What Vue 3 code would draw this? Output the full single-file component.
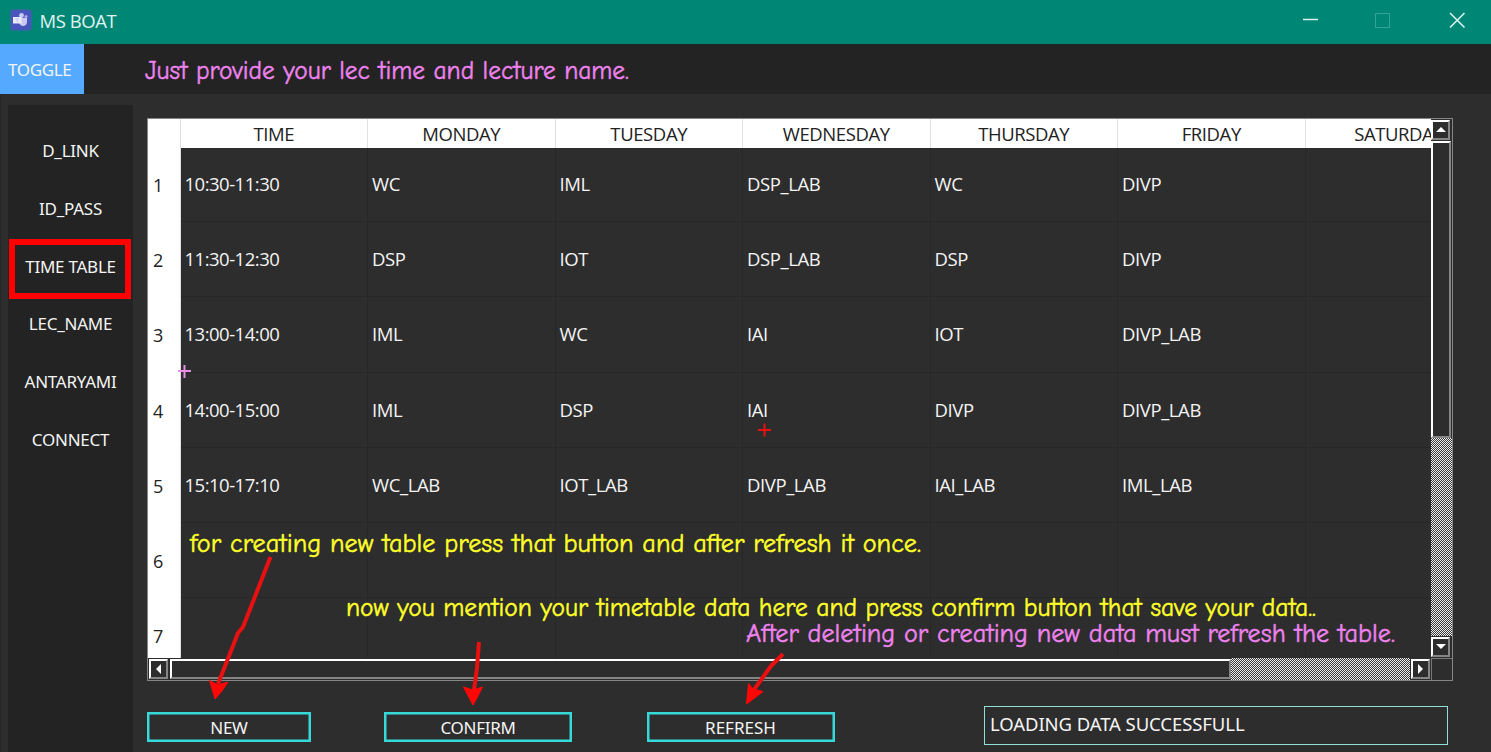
<script setup>
const menu = ['D_LINK', 'ID_PASS', 'TIME TABLE', 'LEC_NAME', 'ANTARYAMI', 'CONNECT']
const days = ['TIME', 'MONDAY', 'TUESDAY', 'WEDNESDAY', 'THURSDAY', 'FRIDAY', 'SATURDAY']
const rows = [
  ['10:30-11:30', 'WC', 'IML', 'DSP_LAB', 'WC', 'DIVP', ''],
  ['11:30-12:30', 'DSP', 'IOT', 'DSP_LAB', 'DSP', 'DIVP', ''],
  ['13:00-14:00', 'IML', 'WC', 'IAI', 'IOT', 'DIVP_LAB', ''],
  ['14:00-15:00', 'IML', 'DSP', 'IAI', 'DIVP', 'DIVP_LAB', ''],
  ['15:10-17:10', 'WC_LAB', 'IOT_LAB', 'DIVP_LAB', 'IAI_LAB', 'IML_LAB', ''],
  ['', '', '', '', '', '', ''],
  ['', '', '', '', '', '', ''],
]
const notes = [
  { x: 145, y: 79, w: 484, tone: 'pink', text: 'Just provide your lec time and lecture name.' },
  { x: 190, y: 552, w: 731, tone: 'yellow', text: 'for creating new table press that button and after refresh it once.' },
  { x: 346, y: 616, w: 970, tone: 'yellow', text: 'now you mention your timetable data here and press confirm button that save your data..' },
  { x: 746, y: 642, w: 649, tone: 'pink', text: 'After deleting or creating new data must refresh the table.' },
]
</script>

<template>
  <div class="window">
    <header class="titlebar">
      <svg class="logo" width="22" height="22" viewBox="0 0 22 22">
        <rect width="22" height="22" rx="4" fill="#2f6aa0" />
        <rect x="1.500" y="1.500" width="19" height="19" rx="3" fill="#4b53bc" />
        <circle cx="11.500" cy="6.500" r="2.400" fill="#c9caf2" />
        <circle cx="16" cy="7.500" r="1.600" fill="#a9acec" />
        <path d="M9 9h8v4c0 2.500-2 4-4 4S9 15 9 13z" fill="#c9caf2" />
        <path d="M3 8h8.500v6.500H3z" fill="#e9e9fb" />
        <path d="M5.500 9.800h3.500M7.300 9.800v3.500" stroke="#c3c5f0" stroke-width="1" />
      </svg>
      <span class="title">MS BOAT</span>
      <svg class="controls" width="160" height="20" viewBox="0 0 160 20" fill="none">
        <path d="M0 9.500h15" stroke="#d9f3ee" stroke-width="1.500" />
        <rect x="72.500" y="3.500" width="14" height="14" stroke="#36a294" />
        <path d="M147 3l14.500 14.500M161.500 3l-14.500 14.500" stroke="#d9f3ee" stroke-width="1.600" />
      </svg>
    </header>
    <div class="topbar"><button class="toggle">TOGGLE</button></div>
    <div class="content">
      <nav class="sidebar">
        <a v-for="item in menu" :key="item" class="item"><span>{{ item }}</span></a>
      </nav>
      <main class="main">
        <div class="frame">
          <div class="viewport">
            <div class="row head">
              <div class="num"></div>
              <div v-for="d in days" :key="d" class="cell">{{ d }}</div>
            </div>
            <div v-for="(r, i) in rows" :key="i" class="row">
              <div class="num">{{ i + 1 }}</div>
              <div v-for="(c, j) in r" :key="j" class="cell" :class="{ time: j === 0 }">{{ c }}</div>
            </div>
          </div>
          <div class="vbar">
            <div class="arrow"><svg width="10" height="6" viewBox="0 0 10 6"><path d="M5 0l5 5H0z" fill="#fff" /></svg></div>
            <div class="thumb vthumb"></div>
            <div class="dither"></div>
            <div class="arrow"><svg width="10" height="6" viewBox="0 0 10 6"><path d="M0 0h10L5 5z" fill="#fff" /></svg></div>
          </div>
          <div class="hbar">
            <div class="arrow"><svg width="6" height="10" viewBox="0 0 6 10"><path d="M5 0v10L0 5z" fill="#fff" /></svg></div>
            <div class="thumb hthumb"></div>
            <div class="dither"></div>
            <div class="arrow"><svg width="6" height="10" viewBox="0 0 6 10"><path d="M0 0v10l5-5z" fill="#fff" /></svg></div>
          </div>
          <div class="corner"></div>
        </div>
        <div class="actions">
          <button class="btn new">NEW</button>
          <button class="btn confirm">CONFIRM</button>
          <button class="btn refresh">REFRESH</button>
          <div class="status">LOADING DATA SUCCESSFULL</div>
        </div>
      </main>
    </div>
    <svg class="notes" width="1491" height="752" viewBox="0 0 1491 752">
      <rect x="12" y="242" width="116" height="54" fill="none" stroke="#fe0000" stroke-width="6" />
      <text v-for="n in notes" :key="n.y" :x="n.x" :y="n.y" :textLength="n.w" lengthAdjust="spacingAndGlyphs" :class="n.tone">{{ n.text }}</text>
      <g fill="none" stroke="#e81010" stroke-width="4" stroke-linejoin="round">
        <path d="M270.500 557L243 627L238 633L218 684" />
        <path d="M479 642L477 668L474 690" />
        <path d="M783 654L771 666L753 691" />
      </g>
      <g fill="#fe0606" stroke="#fe0606" stroke-width="1" stroke-linejoin="round">
        <path d="M209.500 680.500L218 685L228 682L222 691L215 699Z" />
        <path d="M463.500 687L473 690L482.500 687L478 696L473 705Z" />
        <path d="M748.500 683.500L753 689L763 691.500L756 697L746.500 704Z" />
      </g>
      <path d="M178 371h13M184.500 365v13" stroke="#ea8cea" stroke-width="2" />
      <path d="M758 430h13M764.500 423.500v13" stroke="#e81010" stroke-width="2" />
    </svg>
  </div>
</template>

<style>
body { margin: 0; background: #2d2d2d; overflow: hidden; }
</style>

<style scoped>
.window {
  position: relative; display: flex; flex-direction: column;
  width: 1491px; height: 752px; overflow: hidden; background: #2d2d2d;
  font-family: "Open Sans", "Noto Sans", sans-serif; color: #f4f4f4;
}
.window *, .window { box-sizing: border-box; }
button { font: inherit; color: inherit; background: none; border: 0; padding: 0; }
.titlebar { flex: none; display: flex; align-items: center; height: 44px; padding: 0 20px 4px 10px; background: #008675; }
.logo { flex: none; filter: blur(.7px); }
.title { margin-left: 7.500px; font-size: 18.500px; letter-spacing: -.45px; color: #e0f3f0; }
.controls { flex: none; margin-left: auto; overflow: visible; transform: translateX(-8px); }
.topbar { flex: none; height: 50px; background: #232323; }
.toggle { display: block; width: 84px; height: 50px; background: #55aaff; text-align: left; padding: 1px 0 0 8px; font: 17px "Noto Sans", sans-serif; letter-spacing: -.35px; }
.content { flex: 1; min-height: 0; display: flex; border-left: 1px solid #272727; }
.sidebar { width: 125px; margin: 11px 0 0 7px; padding-top: 17px; background: #232323; font: 17px "Noto Sans", sans-serif; }
.item { display: flex; align-items: center; justify-content: center; height: 57.650px; letter-spacing: -.25px; }
.main { margin: 24px 0 0 14px; width: 1306px; }
.frame {
  display: grid; grid-template-columns: 1283px 21px; grid-template-rows: 539px 22px;
  width: 1306px; height: 563px; border: 1px solid #868686; background: #2d2d2d;
}
.viewport { overflow: hidden; min-width: 0; min-height: 0; }
.row { display: flex; width: max-content; height: 75.200px; }
.head { height: 29px; margin-bottom: -1px; position: relative; background: #fff; }
.num { display: flex; align-items: center; width: 32.500px; padding-left: 5px; padding-top: 1px; background: #fff; color: #222; font-size: 18px; border-right: 1px solid #ddd; }
.cell { display: flex; align-items: center; width: 187.500px; padding: 0 0 1px 4px; font-size: 18.500px; letter-spacing: -.4px; border-right: 1px solid #272727; border-bottom: 1px solid #272727; }
.time { letter-spacing: -.5px; }
.head .cell { justify-content: center; padding: 0; color: #222; font-size: 18.500px; letter-spacing: -.4px; border-bottom: 0; border-right-color: #e2e2e2; }
.vbar { display: flex; flex-direction: column; }
.hbar { display: flex; }
.arrow { flex: none; display: flex; align-items: center; justify-content: center; margin: 1px; width: 19px; height: 20px; border: 2px solid; border-color: #fff #858585 #858585 #fff; }
.vbar .arrow { margin-left: 0; }
.thumb { flex: none; border: 2px solid; border-color: #fff #858585 #858585 #fff; background: #2d2d2d; }
.vthumb { height: 297px; margin: 0 1px 0 0; }
.hthumb { width: 1061px; margin: 1px 0 1px 1px; }
.dither { flex: 1; background: repeating-conic-gradient(#ededed 0 25%, #3a3a3a 0 50%) 0 0 / 2px 2px; }
.corner { background: #2d2d2d; border-left: 1px solid #777; border-top: 1px solid #777; }
.actions { display: flex; align-items: flex-start; padding-top: 25px; }
.btn { height: 30px; margin-top: 6px; border: 2px solid #36d9d9; box-shadow: inset 0 0 0 .5px #36d9d9; font: 17px/27px "Noto Sans", sans-serif; letter-spacing: -.3px; }
.new { width: 164px; }
.confirm { width: 188px; margin-left: 73px; }
.refresh { width: 188px; margin-left: 74.500px; }
.refresh { letter-spacing: 0; }
.status { width: 464px; height: 39px; margin-left: 149.500px; padding: 0 0 0 5px; border: 1.500px solid #8fe0d6; font: 18.500px/33px "Noto Sans", sans-serif; letter-spacing: -.08px; }
.notes { position: absolute; left: 0; top: 0; pointer-events: none; }
.notes text { font-family: "Comic Sans MS", "Comic Neue", "Noto Sans", sans-serif; font-size: 26.500px; stroke-width: .5px; }
.pink { fill: #ee82ee; stroke: #ee82ee; }
.yellow { fill: #ffff2a; stroke: #ffff2a; }
</style>
